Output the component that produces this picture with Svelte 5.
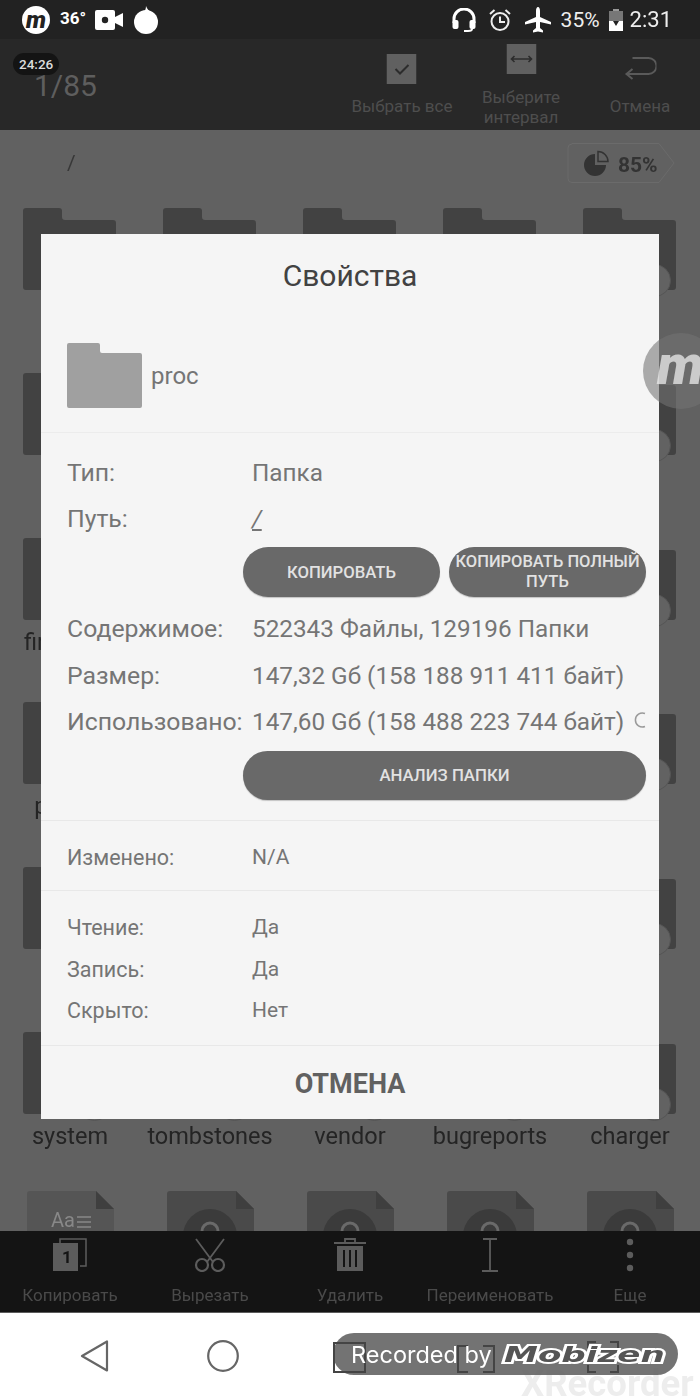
<script lang="ts">
  // File manager screen dimmed behind the "Свойства" dialog.
  // Names under the dialog can't be read in the shot, so those cells stay unlabelled.
  const names = [
    '', '', '', '', '',
    '', '', '', '', '',
    'firmware', '', '', '', '',
    'persist', '', '', '', '',
    '', '', '', '', '',
    'system', 'tombstones', 'vendor', 'bugreports', 'charger',
  ];
  const docs = [0, 1, 2, 3, 4];
  const actions = [
    { key: 'copy', label: 'Копировать' },
    { key: 'cut', label: 'Вырезать' },
    { key: 'del', label: 'Удалить' },
    { key: 'ren', label: 'Переименовать' },
    { key: 'more', label: 'Еще' },
  ];
</script>

<div class="screen">
  <header class="status">
    <div class="status-left">
      <span class="logo-dot">m</span>
      <span class="temp">36°</span>
      <svg width="28" height="24" viewBox="0 0 28 24" class="cam">
        <rect x="0" y="2" width="20" height="20" rx="2" fill="#fff" />
        <path d="M20 9l8-4v14l-8-4z" fill="#fff" />
        <circle cx="10" cy="12" r="3.2" fill="#222" />
      </svg>
      <svg width="26" height="28" viewBox="0 0 26 28" class="flame">
        <circle cx="13" cy="16" r="12" fill="#fff" />
        <path d="M5 9c2 0 3-1 5-2 2-2 3-4 3-7 1 3 3 5 5 6l3 3z" fill="#fff" />
      </svg>
    </div>
    <div class="status-right">
      <svg width="24" height="24" viewBox="0 0 24 24">
        <path d="M2 15v-4a10 10 0 0 1 20 0v4" fill="none" stroke="#fff" stroke-width="3" />
        <rect x="0.5" y="12" width="6" height="9" rx="2" fill="#fff" />
        <rect x="17.5" y="12" width="6" height="9" rx="2" fill="#fff" />
        <path d="M20 21c0 1.500-2 2-4 2h-4" fill="none" stroke="#fff" stroke-width="2" />
      </svg>
      <svg width="24" height="24" viewBox="0 0 24 24" class="alarm">
        <circle cx="12" cy="13.500" r="8.500" fill="none" stroke="#eee" stroke-width="2" />
        <path d="M12 8.500v5.500h5M2 6l4.500-4M22 6l-4.500-4" fill="none" stroke="#eee" stroke-width="2" />
      </svg>
      <svg width="26" height="26" viewBox="0 0 26 26" class="plane">
        <path d="M13 0c1.300 0 2 2 2 4v6l11 5v2.500l-11-2.500v6l3 2.500v2l-5-1-5 1v-2l3-2.500v-6L0 17.500V15l11-5V4c0-2 .7-4 2-4z" fill="#fff" />
      </svg>
      <span class="pct">35%</span>
      <svg width="14" height="22" viewBox="0 0 14 22" class="batt">
        <rect x="4" y="0" width="6" height="3" fill="#999" />
        <rect x="0" y="2" width="14" height="20" fill="#777" />
        <rect x="0" y="12" width="14" height="10" fill="#fff" />
        <path d="M7 5v7H4l3 5 3-5H7" fill="#222" />
      </svg>
      <span class="clock">2:31</span>
    </div>
  </header>

  <div class="toolbar">
    <span class="badge">24:26</span>
    <span class="count">1/85</span>
    <div class="tool-actions">
      <div class="tool">
        <svg width="30" height="30" viewBox="0 0 30 30" class="tool-check">
          <rect width="30" height="30" fill="#606060" />
          <path d="M9 15l4.500 4.500L22 11" fill="none" stroke="#2c2c2c" stroke-width="2" />
        </svg>
        <span>Выбрать все</span>
      </div>
      <div class="tool tool-up">
        <svg width="30" height="30" viewBox="0 0 30 30">
          <rect width="30" height="30" fill="#606060" />
          <path d="M5 15h20M8 12l-3 3 3 3M22 12l3 3-3 3" fill="none" stroke="#2c2c2c" stroke-width="1.600" />
        </svg>
        <span>Выберите<br />интервал</span>
      </div>
      <div class="tool">
        <svg width="32" height="30" viewBox="0 0 32 30">
          <path d="M8 5h16a8 8 0 0 1 0 16H3M8 16l-6 5 6 5" transform="translate(0 -1)" fill="none" stroke="#5a5a5a" stroke-width="2" />
        </svg>
        <span>Отмена</span>
      </div>
    </div>
  </div>

  <main class="content">
    <div class="pathbar">
      <span class="path">/</span>
      <div class="chip">
        <svg class="chip-bg" width="108" height="40" viewBox="0 0 108 40">
          <path d="M5 .5h87l15 19.500-15 19.500H5a4 4 0 0 1-4-4V5a4 4 0 0 1 4-4z" fill="none" stroke="#6b6b6b" />
        </svg>
        <svg width="26" height="26" viewBox="0 0 26 26">
          <path d="M11 4a11 11 0 1 0 11 11H11z" fill="#333" />
          <path d="M14 1.500a10 10 0 0 1 10 10H14z" fill="none" stroke="#333" stroke-width="1.500" />
        </svg>
        <span class="chip-pct">85%</span>
      </div>
    </div>

    <div class="grid">
      {#each names as name}
        <div class="cell">
          <svg class="folder" width="93" height="82" viewBox="0 0 93 82">
            <path d="M3 0h33a3 3 0 0 1 3 3v6a3 3 0 0 0 3 3h48a3 3 0 0 1 3 3v64a3 3 0 0 1-3 3H3a3 3 0 0 1-3-3V3a3 3 0 0 1 3-3z" fill="#424242" />
          </svg>
          <span class="tick"></span>
          {#if name}<span class="name">{name}</span>{/if}
        </div>
      {/each}
      {#each docs as i}
        <div class="cell">
          <svg class="doc" width="87" height="90" viewBox="0 0 87 90">
            <path d="M3 0h66l18 18v72H0V3a3 3 0 0 1 3-3z" fill={i === 0 ? '#555' : '#4a4a4a'} />
            <path d="M69 0l18 18H69z" fill="#3f3f3f" />
            {#if i === 0}
              <text x="24" y="36" class="aa">Aa</text>
              <path d="M50 26h14M50 31h14M50 36h14M24 41h40" stroke="#888" stroke-width="1.500" />
            {:else}
              <circle cx="43" cy="45" r="27" fill="#3b3b3b" />
              <circle cx="43" cy="40" r="8" fill="none" stroke="#6a6a6a" stroke-width="3" />
            {/if}
          </svg>
        </div>
      {/each}
    </div>
  </main>

  <nav class="actions">
    {#each actions as a}
      <div class="action">
        <div class="action-icon">
          {#if a.key === 'copy'}
            <svg width="34" height="34" viewBox="0 0 34 34">
              <path d="M7 5V1h26v27h-6" fill="none" stroke="#5c5c5c" stroke-width="1.500" />
              <path d="M0 5h25v28H0z" fill="#5c5c5c" />
              <text x="9" y="25" class="one">1</text>
            </svg>
          {:else if a.key === 'cut'}
            <svg width="34" height="34" viewBox="0 0 34 34">
              <path d="M3 1l17 23M31 1L14 24" fill="none" stroke="#5c5c5c" stroke-width="1.800" />
              <circle cx="9" cy="27" r="6" fill="none" stroke="#5c5c5c" stroke-width="2.200" />
              <circle cx="25" cy="27" r="6" fill="none" stroke="#5c5c5c" stroke-width="2.200" />
            </svg>
          {:else if a.key === 'del'}
            <svg width="34" height="34" viewBox="0 0 34 34">
              <path d="M1 5h32M12 5V1h10v4" fill="none" stroke="#5c5c5c" stroke-width="1.800" />
              <path d="M4 8h26v25H4z" fill="#5c5c5c" />
              <path d="M11 12v17M17 12v17M23 12v17" stroke="#141414" stroke-width="2" />
            </svg>
          {:else if a.key === 'ren'}
            <svg width="18" height="34" viewBox="0 0 18 34">
              <path d="M2 1h14M9 1v32M1 33h16" fill="none" stroke="#5c5c5c" stroke-width="1.800" />
            </svg>
          {:else}
            <svg width="8" height="34" viewBox="0 0 8 34">
              <circle cx="4" cy="4" r="3.200" fill="#5c5c5c" />
              <circle cx="4" cy="17" r="3.200" fill="#5c5c5c" />
              <circle cx="4" cy="30" r="3.200" fill="#5c5c5c" />
            </svg>
          {/if}
        </div>
        <span>{a.label}</span>
      </div>
    {/each}
  </nav>

  <footer class="navbar">
    <svg width="30" height="32" viewBox="0 0 30 32" class="nav-back">
      <path d="M27 1.500v29L2 16z" fill="none" stroke="#666" stroke-width="2.200" stroke-linejoin="round" />
    </svg>
    <svg width="32" height="32" viewBox="0 0 32 32" class="nav-home">
      <circle cx="16" cy="16" r="14.800" fill="none" stroke="#666" stroke-width="2.200" />
    </svg>
  </footer>

  <section class="dialog">
    <h2 class="title">Свойства</h2>
    <div class="head">
      <svg width="75" height="65" viewBox="0 0 75 65">
        <path d="M2 0h29a2 2 0 0 1 2 2v6a2 2 0 0 0 2 2h38a2 2 0 0 1 2 2v51a2 2 0 0 1-2 2H2a2 2 0 0 1-2-2V2a2 2 0 0 1 2-2z" fill="#a0a0a0" />
      </svg>
      <span>proc</span>
    </div>

    <div class="block">
      <div class="row"><span>Тип:</span><span>Папка</span></div>
      <div class="row"><span>Путь:</span><span class="link">/</span></div>
      <div class="btns">
        <button type="button">КОПИРОВАТЬ</button>
        <button type="button" class="tight">КОПИРОВАТЬ ПОЛНЫЙ ПУТЬ</button>
      </div>
      <div class="row"><span>Содержимое:</span><span>522343 Файлы, 129196 Папки</span></div>
      <div class="row"><span>Размер:</span><span>147,32 Gб (158 188 911 411 байт)</span></div>
      <div class="row">
        <span>Использовано:</span><span>147,60 Gб (158 488 223 744 байт)</span>
        <svg class="spin" width="12" height="18" viewBox="0 0 12 18">
          <path d="M11 2.500a7 7 0 1 0 0 13" fill="none" stroke="#9a9a9a" stroke-width="1.500" />
        </svg>
      </div>
      <button type="button" class="wide">АНАЛИЗ ПАПКИ</button>
    </div>

    <div class="block-modified small"><span>Изменено:</span><span>N/A</span></div>

    <div class="block-perm">
      <div class="small"><span>Чтение:</span><span>Да</span></div>
      <div class="small"><span>Запись:</span><span>Да</span></div>
      <div class="small"><span>Скрыто:</span><span>Нет</span></div>
    </div>

    <div class="cancel">ОТМЕНА</div>
  </section>

  <div class="fab"><span>m</span></div>

  <div class="watermark">XRecorder</div>
  <div class="pill">
    <svg class="brackets" width="300" height="34" viewBox="0 0 300 34">
      <path d="M1 2h31v29H1zM135 5h-10v26h10M150 5h11v26h-11M255 8V1h8M277 1h8v7M255 24v7h8M285 24v7h-8" fill="none" stroke="#444" stroke-width="2" />
    </svg>
    <span class="rec">Recorded by</span>
    <span class="mobizen">Mobizen</span>
  </div>
</div>

<style>
  :global(body) {
    margin: 0;
    background: #fff;
  }
  .screen {
    position: relative;
    display: flex;
    flex-direction: column;
    width: 700px;
    height: 1400px;
    overflow: hidden;
    font-family: Roboto, "Noto Sans", sans-serif;
    filter: blur(0.5px);
  }

  .status {
    display: flex;
    align-items: center;
    justify-content: space-between;
    box-sizing: border-box;
    height: 39px;
    padding: 0 28px 0 22px;
    color: #fff;
    background: #222;
  }
  .status-left,
  .status-right {
    display: flex;
    align-items: center;
  }
  .logo-dot {
    display: flex;
    align-items: center;
    justify-content: center;
    width: 28px;
    height: 28px;
    font-size: 24px;
    font-weight: 900;
    font-style: italic;
    line-height: 24px;
    color: #222;
    background: #fff;
    border-radius: 50%;
  }
  .temp {
    margin: -4px 0 0 10px;
    font-size: 17px;
    font-weight: 700;
  }
  .cam {
    margin-left: 9px;
  }
  .flame {
    margin-left: 10px;
  }
  .status-right svg {
    display: block;
  }
  .alarm {
    margin-left: 12px;
  }
  .plane {
    margin-left: 13px;
  }
  .pct {
    margin-left: 10px;
    font-size: 21px;
    color: #eee;
  }
  .batt {
    margin-left: 9px;
  }
  .clock {
    margin-left: 7px;
    font-size: 22px;
    color: #eee;
  }

  .toolbar {
    position: relative;
    display: flex;
    justify-content: space-between;
    box-sizing: border-box;
    height: 91px;
    background: #282828;
  }
  .badge {
    position: absolute;
    top: 14px;
    left: 13px;
    padding: 0 6px;
    font-size: 13.500px;
    font-weight: 500;
    line-height: 22px;
    color: #ddd;
    background: #141414;
    border-radius: 11px;
  }
  .count {
    margin: 28px 0 0 34px;
    font-size: 30px;
    line-height: 38px;
    color: #5e5e5e;
  }
  .tool-actions {
    display: flex;
    transform: translateX(-0.5px);
  }
  .tool {
    display: flex;
    flex-direction: column;
    align-items: center;
    width: 119px;
    padding-top: 15px;
    font-size: 17px;
    line-height: 20px;
    color: #4e4e4e;
    text-align: center;
  }
  .tool span {
    margin-top: 12px;
  }
  .tool-check {
    margin-left: -2px;
  }
  .tool-up {
    padding-top: 5px;
  }
  .tool-up span {
    margin-top: 13px;
  }

  .content {
    flex: 1;
    min-height: 0;
    overflow: hidden;
    background: #616161;
  }
  .pathbar {
    display: flex;
    justify-content: space-between;
    box-sizing: border-box;
    height: 78px;
    padding: 13px 25px 0 67px;
  }
  .path {
    font-size: 21px;
    line-height: 40px;
    color: #383838;
  }
  .chip {
    position: relative;
    display: flex;
    align-items: center;
    gap: 8px;
    box-sizing: border-box;
    width: 108px;
    height: 40px;
    padding-left: 17px;
    font-size: 21px;
    font-weight: 700;
    color: #333;
  }
  .chip-pct {
    margin-top: 4px;
  }
  .chip-bg {
    position: absolute;
    top: 0;
    left: 0;
  }
  .grid {
    display: grid;
    grid-template-columns: repeat(5, 140px);
    grid-auto-rows: 164.800px;
  }
  .cell {
    position: relative;
    display: flex;
    flex-direction: column;
    align-items: center;
  }
  .folder {
    display: block;
    flex: none;
    margin-left: -1px;
  }
  .tick {
    position: absolute;
    top: 56px;
    left: 62px;
    box-sizing: border-box;
    width: 33px;
    height: 33px;
    margin-left: 16px;
    background: #626262;
    border: 1px solid #555;
    border-radius: 50%;
  }
  .name {
    margin-top: 8px;
    font-size: 23.500px;
    line-height: 28px;
    color: #242424;
    white-space: nowrap;
  }
  .doc {
    display: block;
    flex: none;
    margin-top: -6px;
  }
  .aa {
    font-size: 20px;
    fill: #888;
  }
  .one {
    font-size: 17px;
    font-weight: 700;
    fill: #141414;
  }

  .actions {
    display: flex;
    box-sizing: border-box;
    height: 82px;
    background: #141414;
    border-bottom: 1px solid #5c5c5c;
  }
  .action {
    display: flex;
    flex: none;
    flex-direction: column;
    align-items: center;
    width: 140px;
    padding-top: 7px;
    font-size: 17px;
    color: #4a4a4a;
  }
  .action-icon {
    display: flex;
    justify-content: center;
    height: 34px;
  }
  .action span {
    margin-top: 13px;
    line-height: 20px;
    white-space: nowrap;
  }

  .navbar {
    display: flex;
    flex: none;
    align-items: flex-start;
    box-sizing: border-box;
    height: 87px;
    padding: 27px 0 0 80px;
    background: #fff;
  }
  .nav-home {
    margin-left: 97px;
  }

  .dialog {
    position: absolute;
    top: 234px;
    left: 41px;
    box-sizing: border-box;
    width: 618px;
    height: 885px;
    color: #757575;
    background: #f5f5f5;
  }
  .title {
    height: 82px;
    margin: 0;
    font-size: 30px;
    font-weight: 400;
    line-height: 84px;
    color: #424242;
    text-align: center;
  }
  .head {
    display: flex;
    align-items: center;
    gap: 9px;
    box-sizing: border-box;
    height: 117px;
    padding: 27px 0 25px 26px;
    font-size: 24px;
    border-bottom: 1px solid #ececec;
  }
  .head svg {
    flex: none;
  }
  .head span {
    margin-top: 1px;
  }
  .block {
    box-sizing: border-box;
    height: 388px;
    padding: 17px 13px 0 26px;
    border-bottom: 1px solid #e8e8e8;
  }
  .row {
    position: relative;
    display: flex;
    height: 46.500px;
    font-size: 24.300px;
    line-height: 46.500px;
    white-space: nowrap;
  }
  .row > span:first-child {
    flex: none;
    width: 185px;
    font-size: 24.800px;
  }
  .row:nth-child(-n+2) {
    height: 46px;
  }
  .link {
    font-style: italic;
    text-decoration: underline;
  }
  .spin {
    position: absolute;
    top: 12px;
    right: 0;
  }
  .btns {
    display: flex;
    gap: 9px;
    margin: 5px 0 9px 176px;
  }
  button {
    box-sizing: border-box;
    height: 50px;
    padding: 0;
    font-family: inherit;
    font-size: 16.700px;
    font-weight: 500;
    color: #e2e2e2;
    background: #696969;
    border: 0;
    border-radius: 25px;
    box-shadow: 0 1px 1px #c4c4c4;
  }
  .btns button {
    flex: 1;
  }
  .tight {
    font-size: 16.500px;
    line-height: 20px;
  }
  .wide {
    display: block;
    width: 403px;
    height: 49px;
    margin: 5px 0 0 176px;
    font-size: 16.800px;
  }
  .small {
    display: flex;
    font-size: 21px;
  }
  .small > span:first-child {
    flex: none;
    width: 185px;
    font-size: 21.500px;
  }
  .block-modified {
    box-sizing: border-box;
    height: 70px;
    padding-left: 26px;
    line-height: 73px;
    border-bottom: 1px solid #e8e8e8;
  }
  .block-perm {
    box-sizing: border-box;
    height: 155px;
    padding: 16px 0 0 26px;
    line-height: 41.500px;
    border-bottom: 1px solid #e8e8e8;
  }
  .cancel {
    font-size: 27px;
    font-weight: 700;
    line-height: 76px;
    color: #616161;
    text-align: center;
  }

  .fab {
    position: absolute;
    top: 333px;
    left: 643px;
    display: flex;
    align-items: center;
    box-sizing: border-box;
    width: 76px;
    height: 76px;
    padding-left: 14px;
    background: rgba(115, 115, 115, 0.58);
    border-radius: 50%;
  }
  .fab span {
    font-size: 56px;
    font-weight: 900;
    font-style: italic;
    line-height: 56px;
    color: rgba(235, 235, 235, 0.75);
    transform: translateY(-6px);
  }

  .watermark {
    position: absolute;
    top: 1364px;
    left: 521px;
    font-size: 36.500px;
    font-weight: 700;
    line-height: 40px;
    color: #ededed;
    white-space: nowrap;
  }
  .pill {
    position: absolute;
    top: 1333px;
    left: 333px;
    display: flex;
    align-items: center;
    box-sizing: border-box;
    width: 345px;
    height: 42px;
    padding-left: 18px;
    background: rgba(90, 90, 90, 0.85);
    border-radius: 21px;
  }
  .brackets {
    position: absolute;
    top: 8px;
    left: 0;
  }
  .rec {
    position: relative;
    font-family: Inter, sans-serif;
    font-size: 23.500px;
    color: #fff;
    white-space: nowrap;
  }
  .mobizen {
    position: relative;
    margin-left: 12px;
    font-family: "DejaVu Sans", sans-serif;
    font-size: 22px;
    font-weight: 700;
    font-style: italic;
    color: #555;
    paint-order: stroke fill;
    -webkit-text-stroke: 4px #fff;
    white-space: nowrap;
    transform: scaleX(1.55);
    transform-origin: left center;
  }
</style>
